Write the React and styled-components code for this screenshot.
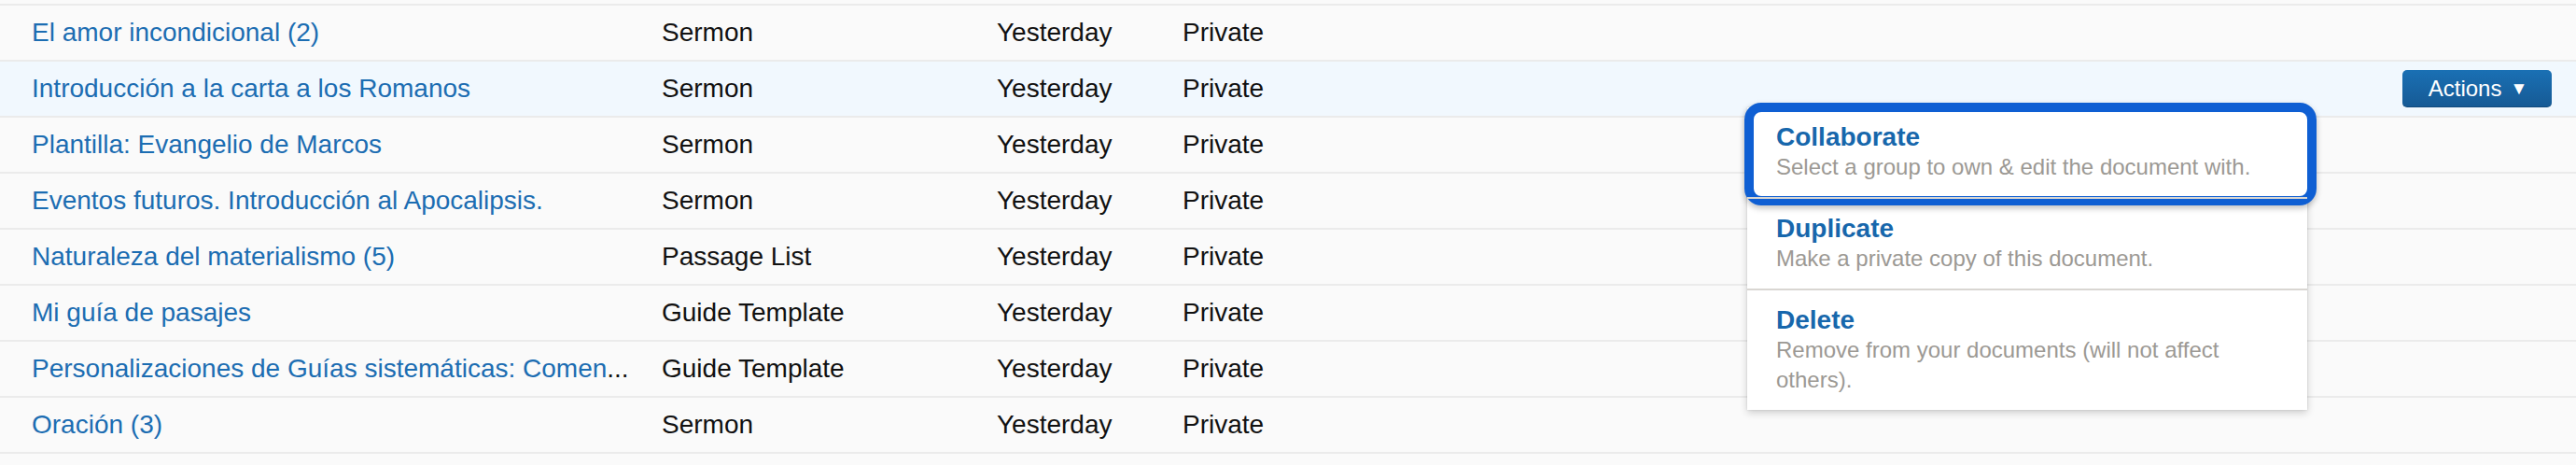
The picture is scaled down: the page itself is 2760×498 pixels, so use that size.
import React from 'react';
import styled, { createGlobalStyle } from 'styled-components';

const GlobalStyle = createGlobalStyle`
  html, body {
    margin: 0;
    padding: 0;
    background: #fafafa;
    font-family: 'Liberation Sans', Arial, Helvetica, sans-serif;
  }
`;

const Table = styled.div`
  padding-top: 4px;
  border-bottom: 2px solid #ebebeb;
`;

const Row = styled.div`
  display: grid;
  grid-template-columns: 675px 359px 199px 1fr auto;
  align-items: center;
  height: 58px;
  padding: 0 26px 0 34px;
  border-top: 2px solid #ebebeb;
  background: ${(p) => (p.$active ? '#f1f8fe' : '#fafafa')};
  font-size: 28px;
  color: #111;
`;

const TitleCell = styled.div`
  white-space: nowrap;
  overflow: hidden;
  padding-right: 20px;
`;

const TitleLink = styled.a`
  color: #1c6db2;
  text-decoration: none;
  cursor: pointer;
`;

const Ellipsis = styled.span`
  color: #111;
`;

const Cell = styled.div`
  white-space: nowrap;
`;

const ActionsCell = styled.div`
  position: relative;
  height: 40px;
`;

const ActionsButton = styled.button`
  display: flex;
  align-items: center;
  justify-content: center;
  gap: 9px;
  width: 160px;
  height: 40px;
  padding: 0 0 0 2px;
  border: none;
  border-bottom: 1px solid #104a7c;
  border-radius: 5px;
  background: linear-gradient(#1a70b4, #165a95);
  color: #fff;
  font-family: inherit;
  font-size: 24px;
  cursor: pointer;

  span {
    font-size: 19px;
  }
`;

const Menu = styled.ul`
  position: absolute;
  top: 100%;
  right: 262px;
  width: 600px;
  margin: 0;
  padding: 0;
  list-style: none;
  background: #fff;
  box-shadow: 0 3px 8px rgba(0, 0, 0, 0.18), 0 0 2px rgba(0, 0, 0, 0.12);
  z-index: 2;
`;

const MenuItem = styled.li`
  position: relative;
  padding: 16px 31px;
  border-top: ${(p) => (p.$first ? 'none' : '2px solid #d9d6d2')};
  cursor: pointer;
`;

const FocusRing = styled.div`
  position: absolute;
  top: -5px;
  left: -3px;
  right: -10px;
  bottom: -9px;
  border: 10px solid #0f5fd3;
  border-radius: 18px;
  box-shadow: 0 3px 6px rgba(0, 0, 0, 0.25);
  pointer-events: none;
`;

const ItemTitle = styled.div`
  font-size: 28px;
  line-height: 32px;
  font-weight: bold;
  color: #1767ac;
`;

const ItemDesc = styled.div`
  font-size: 24px;
  line-height: 32px;
  color: #9c9994;
`;

const docs = [
  { title: 'El amor incondicional (2)', type: 'Sermon' },
  { title: 'Introducción a la carta a los Romanos', type: 'Sermon', active: true },
  { title: 'Plantilla: Evangelio de Marcos', type: 'Sermon' },
  { title: 'Eventos futuros. Introducción al Apocalipsis.', type: 'Sermon' },
  { title: 'Naturaleza del materialismo (5)', type: 'Passage List' },
  { title: 'Mi guía de pasajes', type: 'Guide Template' },
  { title: 'Personalizaciones de Guías sistemáticas: Comen', type: 'Guide Template', cut: true },
  { title: 'Oración (3)', type: 'Sermon' },
];

const menuItems = [
  { title: 'Collaborate', desc: 'Select a group to own & edit the document with.' },
  { title: 'Duplicate', desc: 'Make a private copy of this document.' },
  { title: 'Delete', desc: 'Remove from your documents (will not affect others).' },
];

const App = () => (
  <>
    <GlobalStyle />
    <Table>
      {docs.map((doc) => (
        <Row key={doc.title} $active={doc.active}>
          <TitleCell>
            <TitleLink>{doc.title}</TitleLink>
            {doc.cut && <Ellipsis>...</Ellipsis>}
          </TitleCell>
          <Cell>{doc.type}</Cell>
          <Cell>Yesterday</Cell>
          <Cell>Private</Cell>
          <ActionsCell>
            {doc.active && (
              <>
                <ActionsButton>
                  Actions <span>▼</span>
                </ActionsButton>
                <Menu>
                  {menuItems.map((item, i) => (
                    <MenuItem key={item.title} $first={i === 0}>
                      <ItemTitle>{item.title}</ItemTitle>
                      <ItemDesc>{item.desc}</ItemDesc>
                      {i === 0 && <FocusRing />}
                    </MenuItem>
                  ))}
                </Menu>
              </>
            )}
          </ActionsCell>
        </Row>
      ))}
    </Table>
  </>
);

export default App;
